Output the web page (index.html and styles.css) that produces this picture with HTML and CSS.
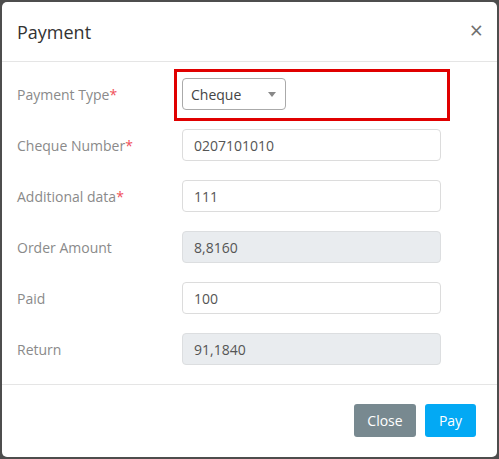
FILE: index.html
```html
<!DOCTYPE html>
<html>
<head>
<meta charset="utf-8">
<link rel="stylesheet" href="styles.css">
</head>
<body>
<div class="modal">
  <div class="modal-header">
    <h4 class="title">Payment</h4>
    <span class="close">&times;</span>
  </div>
  <div class="modal-body">
    <div class="row">
      <label class="lbl">Payment Type<span class="req">*</span></label>
      <div class="field highlight">
        <div class="select"><span>Cheque</span><span class="caret"></span></div>
        <div class="red-box"></div>
      </div>
    </div>
    <div class="row">
      <label class="lbl">Cheque Number<span class="req">*</span></label>
      <div class="field"><div class="input">0207101010</div></div>
    </div>
    <div class="row">
      <label class="lbl">Additional data<span class="req">*</span></label>
      <div class="field"><div class="input">111</div></div>
    </div>
    <div class="row">
      <label class="lbl">Order Amount</label>
      <div class="field"><div class="input disabled">8,8160</div></div>
    </div>
    <div class="row">
      <label class="lbl">Paid</label>
      <div class="field"><div class="input">100</div></div>
    </div>
    <div class="row">
      <label class="lbl">Return</label>
      <div class="field"><div class="input disabled">91,1840</div></div>
    </div>
  </div>
  <div class="modal-footer">
    <button class="btn btn-close">Close</button>
    <button class="btn btn-pay">Pay</button>
  </div>
</div>
</body>
</html>
```
FILE: styles.css
```css
html, body {
  margin: 0;
  padding: 0;
}
body {
  background: #4d4d4d;
  font-family: "Open Sans", "Liberation Sans", sans-serif;
  font-size: 14px;
  padding: 2px;
  height: 459px;
  box-sizing: border-box;
}
.modal {
  background: #fff;
  width: 495px;
  height: 455px;
  border-radius: 5px;
  display: flex;
  flex-direction: column;
}
.modal-header {
  height: 59px;
  border-bottom: 1px solid #e5e5e5;
  display: flex;
  align-items: center;
  justify-content: space-between;
  padding: 0 14px 0 15px;
}
.title {
  margin: 0;
  font-size: 18px;
  font-weight: 400;
  color: #333;
}
.close {
  font-size: 23px;
  color: #6f6f6f;
  line-height: 1;
  margin-top: -2px;
}
.modal-body {
  padding: 16px 15px 19px 15px;
  display: flex;
  flex-direction: column;
  gap: 19px;
  border-bottom: 1px solid #e5e5e5;
}
.row {
  display: grid;
  grid-template-columns: 165px 259px;
  align-items: center;
  height: 32px;
}
.lbl {
  color: #8a8a8a;
}
.req {
  color: #f0505a;
}
.field {
  height: 32px;
}
.highlight {
  position: relative;
}
.input {
  box-sizing: border-box;
  height: 32px;
  border: 1px solid #dcdcdc;
  border-radius: 4px;
  padding: 0 11px;
  display: flex;
  align-items: center;
  color: #555;
}
.input.disabled {
  background: #e9ecef;
  border-color: #dcdee0;
}
.select {
  box-sizing: border-box;
  width: 104px;
  height: 32px;
  border: 1px solid #aaa;
  border-radius: 4px;
  padding: 0 9px 0 8px;
  display: flex;
  align-items: center;
  justify-content: space-between;
  color: #444;
}
.caret {
  width: 0;
  height: 0;
  border-left: 4px solid transparent;
  border-right: 4px solid transparent;
  border-top: 5px solid #888;
  margin-top: 1px;
}
.red-box {
  position: absolute;
  left: -8px;
  top: -9px;
  width: 276px;
  height: 52px;
  box-sizing: border-box;
  border: 3px solid #e00000;
}
.modal-footer {
  flex: 1;
  display: flex;
  justify-content: flex-end;
  align-items: flex-start;
  gap: 9px;
  padding: 19px 21px 0 0;
}
.btn {
  height: 33px;
  border: none;
  border-radius: 3px;
  color: #fff;
  font-family: "Open Sans", "Liberation Sans", sans-serif;
  font-size: 14px;
  padding: 0 12px;
}
.btn-close {
  background: #788990;
  width: 62px;
}
.btn-pay {
  background: #03a9f4;
  width: 51px;
}
```
